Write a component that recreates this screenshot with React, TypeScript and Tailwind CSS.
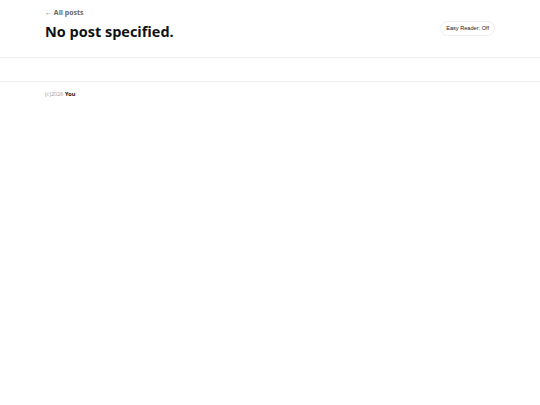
export default function App() {
  return (
    <div className="min-h-[405px] bg-white" style={{ fontFamily: '"Open Sans", sans-serif' }}>
      <header className="flex items-start justify-between px-[45px] pt-[8px] pb-[14px] border-b border-[#eeeeee]">
        <div className="flex flex-col">
          <a className="text-[7px] leading-[10px] font-bold text-[#666666]">← All posts</a>
          <h1 className="mt-[3px] text-[14.5px] leading-[22px] font-bold text-[#111111]">No post specified.</h1>
        </div>
        <button
          className="mt-[13px] h-[15px] px-[5px] rounded-full border border-[#eeeeee] bg-white text-[5.6px] leading-[13px] text-[#222222]"
          style={{ fontFamily: '"Liberation Sans", Arial, sans-serif' }}
        >
          Easy Reader: Off
        </button>
      </header>
      <div className="h-[24px] border-b border-[#eeeeee]" />
      <footer className="px-[45px] pt-[8px] text-[5.5px] leading-[8px]">
        <span className="text-[#999999]">(c)2026 </span>
        <span className="font-bold text-[#111111]">You</span>
      </footer>
    </div>
  );
}
